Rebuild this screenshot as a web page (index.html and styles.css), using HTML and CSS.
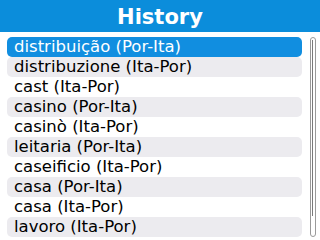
FILE: index.html
```html
<!DOCTYPE html>
<html>
<head>
<meta charset="utf-8">
<link rel="stylesheet" href="styles.css">
</head>
<body>
<div class="screen">
  <div class="header">History</div>
  <div class="body">
    <ul class="list">
      <li class="item selected">distribuição (Por-Ita)</li>
      <li class="item alt">distribuzione (Ita-Por)</li>
      <li class="item">cast (Ita-Por)</li>
      <li class="item alt">casino (Por-Ita)</li>
      <li class="item">casinò (Ita-Por)</li>
      <li class="item alt">leitaria (Por-Ita)</li>
      <li class="item">caseificio (Ita-Por)</li>
      <li class="item alt">casa (Por-Ita)</li>
      <li class="item">casa (Ita-Por)</li>
      <li class="item alt">lavoro (Ita-Por)</li>
    </ul>
    <div class="scrollbar"><div class="thumb"></div></div>
  </div>
</div>
</body>
</html>
```
FILE: styles.css
```css
html, body {
  margin: 0;
  padding: 0;
  background: #ffffff;
}
.screen {
  width: 320px;
  height: 240px;
  overflow: hidden;
  display: flex;
  flex-direction: column;
  font-family: "DejaVu Sans", Verdana, sans-serif;
}
.header {
  height: 32px;
  box-sizing: border-box;
  padding-top: 3px;
  background: #0b8ddb;
  color: #ffffff;
  font-weight: bold;
  font-size: 21px;
  line-height: 29px;
  text-align: center;
  flex: none;
}
.body {
  display: flex;
  padding: 5px 4px 0 7px;
  gap: 8px;
}
.list {
  list-style: none;
  margin: 0;
  padding: 0;
  width: 296px;
}
.item {
  height: 20px;
  line-height: 20px;
  font-size: 16.5px;
  color: #000000;
  padding-left: 7px;
  border-radius: 5px;
  white-space: nowrap;
}
.item.alt {
  background: #ecebef;
}
.item.selected {
  background: #118ee0;
  color: #ffffff;
}
.scrollbar {
  width: 6px;
  height: 200px;
  border: 1px solid #9a9a9a;
  border-radius: 3px;
  box-sizing: border-box;
  position: relative;
}
.thumb {
  position: absolute;
  left: 1px;
  top: 2px;
  width: 1px;
  height: 176px;
  background: #7a7a7a;
}
```
